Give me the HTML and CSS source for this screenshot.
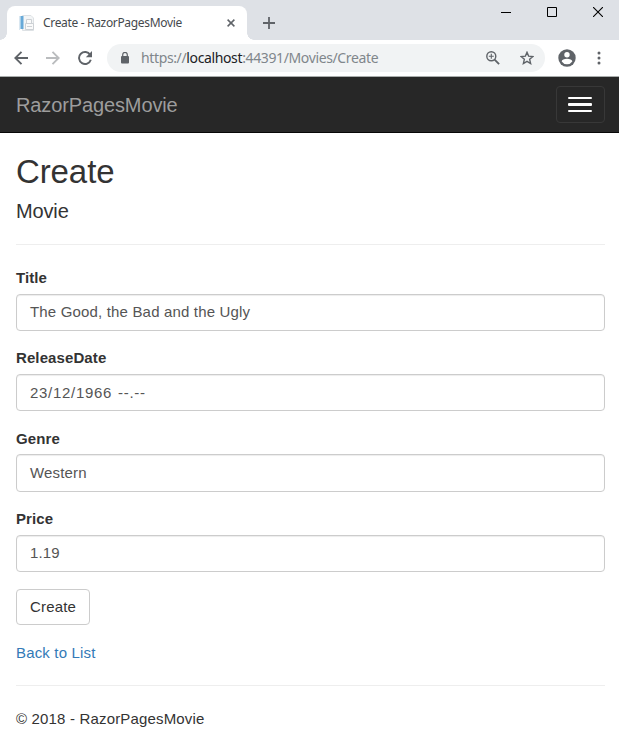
FILE: index.html
```html
<!DOCTYPE html>
<html lang="en">
<head>
<meta charset="utf-8">
<title>Create - RazorPagesMovie</title>
<link rel="stylesheet" href="styles.css">
</head>
<body>
<header class="browser">
  <div class="tabstrip">
    <div class="tab">
      <svg class="favicon" width="16" height="16" viewBox="0 0 16 16">
        <path d="M3.500.5H12l2.500 2.500V15.500H3.500z" fill="#f3f5f6" stroke="#dde1e4"/>
        <path d="M0 1h1v14H0z" fill="#d9e7f1"/><path d="M1 1h3.500v13H1z" fill="#67a9d8"/><path d="M1 1h1v13H1z" fill="#a8cfe9"/>
        <path d="M7.500 4.500h5v4h-5zM6.500 8.500h8v6h-8z" fill="#fafafa" stroke="#cdd1d5"/>
        <path d="M8 11.500h5" stroke="#cdd1d5"/>
      </svg>
      <span class="tab-title">Create - RazorPagesMovie</span>
      <svg class="tab-close" width="8" height="8" viewBox="0 0 8 8"><path d="M.6.6l6.800 6.800M7.400.6L.6 7.400" stroke="#5f6368" stroke-width="1.500"/></svg>
    </div>
    <svg class="new-tab" width="12" height="12" viewBox="0 0 12 12"><path d="M6 0v12M0 6h12" stroke="#5f6368" stroke-width="1.800"/></svg>
    <div class="window-controls">
      <svg width="10" height="11" viewBox="0 0 10 11"><path d="M0 5.500h10" stroke="#000"/></svg>
      <svg width="10" height="10" viewBox="0 0 10 10"><path d="M.5.5h9v9h-9z" fill="none" stroke="#000"/></svg>
      <svg width="10" height="10" viewBox="0 0 10 10"><path d="M0 0l10 10M10 0L0 10" stroke="#000" stroke-width="1.100"/></svg>
    </div>
  </div>
  <div class="toolbar">
    <div class="nav-icons">
      <svg width="14" height="14" viewBox="0 0 14 14"><path d="M14 7H1.500M7.500.8L1.300 7l6.200 6.200" fill="none" stroke="#5f6368" stroke-width="1.900"/></svg>
      <svg width="14" height="14" viewBox="0 0 14 14"><path d="M0 7h12.500M6.500.8L12.700 7l-6.200 6.200" fill="none" stroke="#babcbe" stroke-width="1.900"/></svg>
      <svg width="14" height="14" viewBox="0 0 14 14"><path d="M12.200 3.900A6 6 0 1 0 12.800 8.700" fill="none" stroke="#5f6368" stroke-width="1.900"/><path d="M14 0v6.200H7.800z" fill="#5f6368"/></svg>
    </div>
    <div class="address">
      <svg class="lock" width="8" height="12" viewBox="0 0 8 12"><path d="M0 5q0-1 1-1h6q1 0 1 1v5.500q0 1-1 1H1q-1 0-1-1z" fill="#5f6368"/><path d="M1.700 5V2.700a2.300 2.300 0 0 1 4.600 0V5" fill="none" stroke="#5f6368" stroke-width="1.200"/></svg>
      <span class="url">https://<b>localhost</b>:44391/Movies/Create</span>
      <svg class="magnifier" width="14" height="14" viewBox="0 0 14 14"><circle cx="5.300" cy="5.300" r="4.500" fill="none" stroke="#5f6368" stroke-width="1.400"/><path d="M8.600 8.600l4.500 4.500" stroke="#5f6368" stroke-width="1.800"/><path d="M5.300 2.800v5M2.800 5.300h5" stroke="#5f6368" stroke-width="1.100"/></svg>
      <svg class="star" width="14" height="14" viewBox="0 0 14 14"><path d="M7 1.300l1.600 3.800 4.300.4-3.250 2.800.97 4.200L7 10.300l-3.620 2.200.97-4.200L1.100 5.500l4.300-.4z" fill="none" stroke="#5f6368" stroke-width="1.400"/></svg>
    </div>
    <svg class="avatar" width="18" height="18" viewBox="0 0 18 18"><circle cx="9" cy="9" r="8.700" fill="#5f6368"/><circle cx="9" cy="5.700" r="2.700" fill="#fff"/><path d="M3.700 12.400C3.700 9 14.300 9 14.300 12.400Q12.400 15.200 9 15.200T3.700 12.400z" fill="#fff"/></svg>
    <svg class="more" width="4" height="14" viewBox="0 0 4 14"><g fill="#5f6368"><circle cx="2" cy="2" r="1.500"/><circle cx="2" cy="7" r="1.500"/><circle cx="2" cy="12" r="1.500"/></g></svg>
  </div>
</header>
<nav class="navbar">
  <a class="brand">RazorPagesMovie</a>
  <button class="toggle" type="button" aria-label="Menu"><i></i><i></i><i></i></button>
</nav>
<main class="content">
  <h2>Create</h2>
  <h4>Movie</h4>
  <hr>
  <form>
    <div class="group"><label>Title</label><div class="control">The Good, the Bad and the Ugly</div></div>
    <div class="group"><label>ReleaseDate</label><div class="control date"><span>23/12/1966</span><span class="time">--.--</span></div></div>
    <div class="group genre"><label>Genre</label><div class="control">Western</div></div>
    <div class="group"><label>Price</label><div class="control">1.19</div></div>
    <button class="submit" type="button">Create</button>
  </form>
  <a class="back">Back to List</a>
  <hr class="footer-rule">
  <footer>© 2018 - RazorPagesMovie</footer>
</main>
</body>
</html>
```

FILE: styles.css
```css
* { box-sizing: border-box; }
body { margin: 0; background: #fff; color: #333; font: 15px/22px "Liberation Sans", Arial, sans-serif; letter-spacing: .17px; }
svg { display: block; flex: none; }

.browser { height: 77px; border-bottom: 1px solid #a9adac; font-family: "Noto Sans", sans-serif; }
.tabstrip { height: 40px; background: #dee1e6; display: flex; }
.tab { width: 240px; height: 34px; margin: 6px 0 0 7px; padding: 0 12px; background: #fff; border-radius: 8px 8px 0 0; display: flex; align-items: center; position: relative; }
.tab::before, .tab::after { content: ""; position: absolute; bottom: 0; width: 7px; height: 7px; }
.tab::before { left: -7px; background: radial-gradient(circle at 0 0, transparent 6.5px, #fff 7px); }
.tab::after { right: -7px; background: radial-gradient(circle at 100% 0, transparent 6.5px, #fff 7px); }
.tab-title { margin-left: 8px; font-size: 12px; letter-spacing: -.33px; color: #45494d; white-space: nowrap; }
.tab-close { margin-left: auto; }
.new-tab { margin: 17px 0 0 16px; }
.window-controls { margin: 7px 16px 0 auto; display: flex; gap: 36px; }

.toolbar { height: 36px; display: flex; align-items: center; }
.nav-icons { display: flex; gap: 18px; padding-left: 14px; }
.address { width: 438px; height: 28px; margin-left: 15px; padding-left: 14px; border-radius: 14px; background: #f1f3f4; display: flex; align-items: center; }
.url { margin-left: 12px; font-size: 14px; line-height: 28px; letter-spacing: -.37px; color: #80868b; white-space: nowrap; }
.url b { font-weight: 400; color: #202124; }
.magnifier { margin-left: auto; }
.star { margin: 0 11px 0 20px; }
.avatar { margin-left: 13px; }
.more { margin-left: 21px; }

.navbar { height: 56px; background: #272727; border-bottom: 1px solid #080808; padding: 0 14px 0 16px; display: flex; align-items: center; justify-content: space-between; }
.brand { font-size: 20px; letter-spacing: -.12px; color: #9d9d9d; }
.toggle { width: 49px; height: 37px; padding: 0 2px 0 0; background: none; border: 1px solid #383838; border-radius: 4px; display: flex; flex-direction: column; gap: 4px; align-items: center; justify-content: center; }
.toggle i { width: 24px; height: 2px; background: #fff; border-radius: 1px; }
.toggle i:nth-child(2) { height: 3px; }

.content { padding: 0 14px 0 16px; }
h2 { margin: 21px 0 0; font-size: 33px; line-height: 36px; font-weight: 400; letter-spacing: -.1px; }
h4 { margin: 10px 0 0; font-size: 20px; line-height: 22px; font-weight: 400; letter-spacing: -.15px; }
hr { margin: 22px 0; border: 0; border-top: 1px solid #eee; }
.group { margin-bottom: 16px; }
label { display: block; height: 22px; margin-bottom: 5px; font-size: 15px; font-weight: 700; letter-spacing: .1px; }
.control { height: 37px; padding: 0 13px; border: 1px solid #ccc; border-radius: 4px; box-shadow: inset 0 1px 1px rgba(0,0,0,.075); color: #555; line-height: 33px; display: flex; }
.date { letter-spacing: .7px; line-height: 35px; }
.time { margin-left: 6px; }
.group.genre { margin-top: 17px; }
.genre label { margin-bottom: 4px; }
.genre .control { height: 38px; line-height: 35px; }
.submit { display: block; width: 74px; height: 36px; margin: 17px 0; padding: 0; background: #fff; border: 1px solid #ccc; border-radius: 4px; color: #333; font: inherit; letter-spacing: .17px; }
.back { display: block; color: #337ab7; }
.footer-rule { margin: 21px 0 22px; }
```
